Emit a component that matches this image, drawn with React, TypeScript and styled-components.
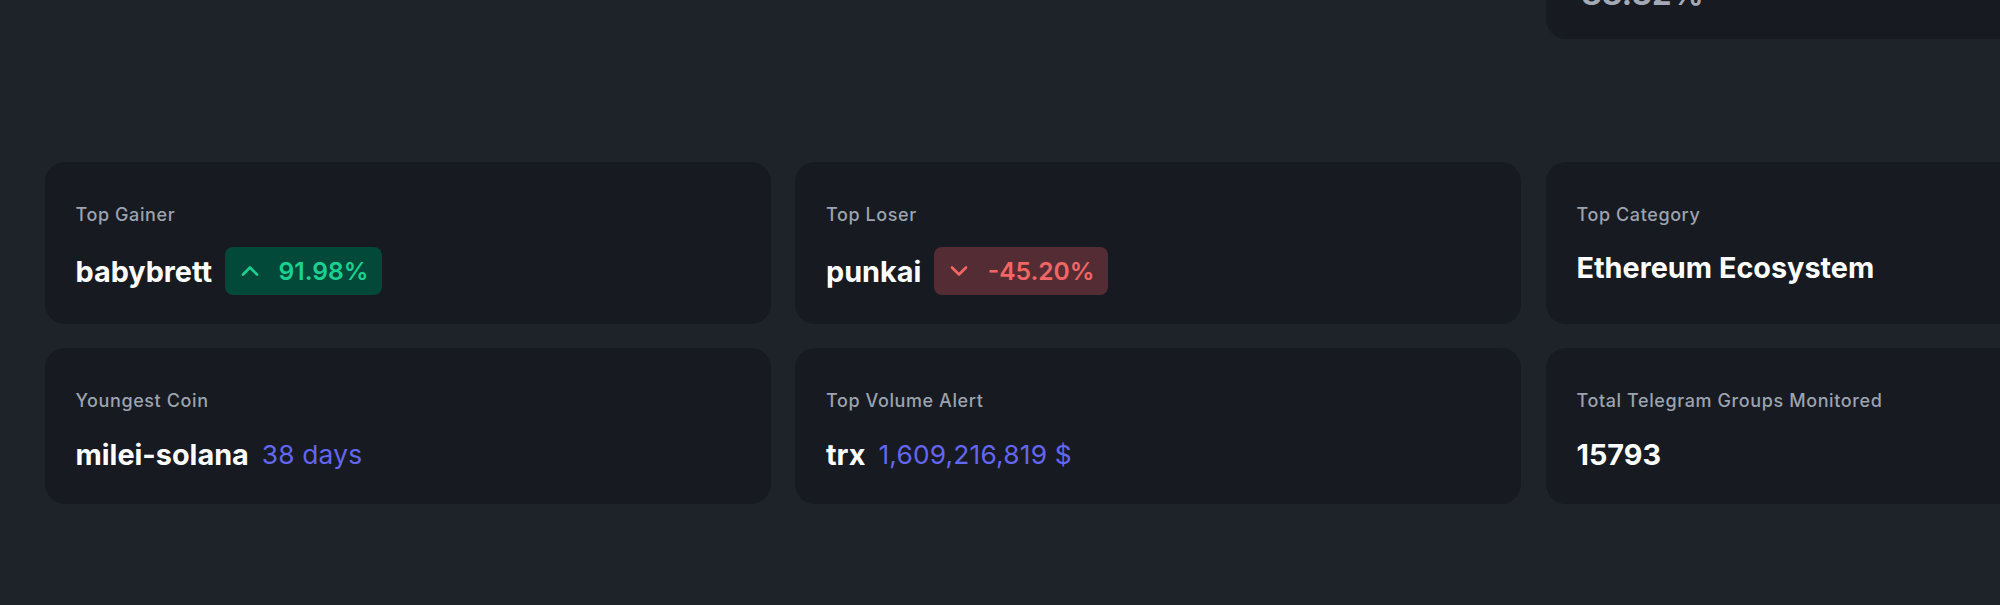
import React from "react";
import styled, { createGlobalStyle } from "styled-components";

const Global = createGlobalStyle`
  html, body {
    margin: 0;
    padding: 0;
    background: #1e232a;
    overflow: hidden;
  }
  body {
    font-family: Inter, "Noto Sans", "Liberation Sans", sans-serif;
    -webkit-font-smoothing: antialiased;
  }
`;

const Page = styled.div`
  min-height: 605px;
  padding-left: 44.5px;
  background: #1e232a;
  box-sizing: border-box;
`;

const Grid = styled.div<{ $shift?: number; $after?: number }>`
  display: grid;
  grid-template-columns: repeat(3, 726px);
  column-gap: 24.5px;
  row-gap: 24.3px;
  margin-top: ${(p) => p.$shift ?? 0}px;
  margin-bottom: ${(p) => p.$after ?? 0}px;
`;

const Card = styled.div<{ $col?: number }>`
  grid-column: ${(p) => p.$col ?? "auto"};
  background: #171a21;
  border-radius: 20px;
  padding: 39.5px 31px 29px;
  display: flex;
  flex-direction: column;
  box-sizing: border-box;
`;

const TopCard = styled(Card)`
  padding: 0 36px 25px;
`;

const TopValue = styled.div`
  font-size: 31px;
  line-height: 40px;
  font-weight: 700;
  letter-spacing: 0.3px;
  color: #a3aab6;
`;

const Label = styled.div`
  font-size: 18px;
  line-height: 25.6px;
  font-weight: 500;
  letter-spacing: 0.6px;
  color: #9ca3af;
`;

const ValueRow = styled.div`
  margin-top: 20.4px;
  display: flex;
  align-items: center;
  gap: 13px;
  min-height: 41px;
`;

const Name = styled.span`
  font-size: 28.8px;
  line-height: 41px;
  font-weight: 700;
  color: #ffffff;
`;

const Accent = styled.span`
  font-size: 26.3px;
  line-height: 41px;
  font-weight: 400;
  letter-spacing: 0.2px;
  color: #6366f1;
`;

const Badge = styled.span<{ $tone: "up" | "down" }>`
  display: inline-flex;
  align-items: center;
  height: 47.6px;
  padding: 0 13px 0 12.5px;
  gap: 17px;
  border-radius: 8px;
  background: ${(p) => (p.$tone === "up" ? "#02493a" : "#532d33")};
  color: ${(p) => (p.$tone === "up" ? "#1bd18f" : "#f46565")};
  font-size: 24.6px;
  font-weight: 600;
`;

const Chevron = ({ up }: { up: boolean }) => (
  <svg width="24" height="24" viewBox="0 0 24 24" fill="none">
    <polyline
      points={up ? "5,15.5 12,8.5 19,15.5" : "5,8.5 12,15.5 19,8.5"}
      stroke="currentColor"
      strokeWidth="2.6"
      strokeLinecap="round"
      strokeLinejoin="round"
    />
  </svg>
);

export default function App() {
  return (
    <Page>
      <Global />
      <Grid $shift={-26.3} $after={123.3}>
        <TopCard $col={3}>
          <TopValue>88.32%</TopValue>
        </TopCard>
      </Grid>
      <Grid>
        <Card>
          <Label>Top Gainer</Label>
          <ValueRow>
            <Name>babybrett</Name>
            <Badge $tone="up">
              <Chevron up />
              91.98%
            </Badge>
          </ValueRow>
        </Card>
        <Card>
          <Label>Top Loser</Label>
          <ValueRow>
            <Name>punkai</Name>
            <Badge $tone="down">
              <Chevron up={false} />
              -45.20%
            </Badge>
          </ValueRow>
        </Card>
        <Card>
          <Label>Top Category</Label>
          <ValueRow>
            <Name>Ethereum Ecosystem</Name>
          </ValueRow>
        </Card>
        <Card>
          <Label>Youngest Coin</Label>
          <ValueRow>
            <Name>milei-solana</Name>
            <Accent>38 days</Accent>
          </ValueRow>
        </Card>
        <Card>
          <Label>Top Volume Alert</Label>
          <ValueRow>
            <Name>trx</Name>
            <Accent>1,609,216,819 $</Accent>
          </ValueRow>
        </Card>
        <Card>
          <Label>Total Telegram Groups Monitored</Label>
          <ValueRow>
            <Name>15793</Name>
          </ValueRow>
        </Card>
      </Grid>
    </Page>
  );
}
